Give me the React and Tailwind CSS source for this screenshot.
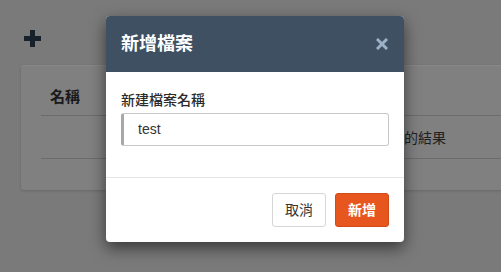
import React from 'react';

const FONT = { fontFamily: '"Liberation Sans", "Noto Sans CJK TC", sans-serif' };

export default function App() {
  return (
    <div className="relative h-[272px] w-[501px] overflow-hidden bg-[#7a7a7a]" style={FONT}>
      {/* page behind the overlay */}
      <div className="pl-[24px] pt-[30px]">
        <svg width="17" height="17" viewBox="0 0 17 17">
          <rect x="6" y="0" width="5" height="17" fill="#17212b" />
          <rect x="0" y="6" width="17" height="5" fill="#17212b" />
        </svg>
      </div>
      <div className="ml-[21px] mt-[18px] h-[125px] w-[520px] rounded-[3px] border-t border-[#888] bg-[#808080] shadow-[0_1px_3px_rgba(0,0,0,0.15)]">
        <div className="mx-[20px]">
          <div className="border-b border-[#6b6b6b] pb-[7px] pl-[9px] pt-[20px] text-[15px] font-semibold leading-[22px] text-[#1a1a1a]">
            名稱
          </div>
          <div className="flex border-b border-[#6b6b6b] pb-[9px] pt-[11px] text-[14px] leading-[22px] text-[#1f1f1f]">
            <div className="w-[405px] text-right">沒有找到符合搜尋的結果</div>
          </div>
        </div>
      </div>

      {/* modal */}
      <div className="absolute left-[106px] top-[16px] w-[298px] overflow-hidden rounded-[4px] bg-white shadow-[0_6px_16px_rgba(0,0,0,0.55)]">
        <div className="flex h-[56px] items-center justify-between bg-[#3e5062] pl-[15px] pr-[16px]">
          <span className="text-[18px] font-bold text-white">新增檔案</span>
          <svg width="12" height="12" viewBox="0 0 12 12">
            <path d="M2 2 L10 10 M10 2 L2 10" stroke="#9cb1c6" strokeWidth="3" strokeLinecap="square" />
          </svg>
        </div>
        <div className="border-b border-[#e5e5e5] px-[15px] pb-[31px] pt-[18px]">
          <div className="mb-[3px] text-[14px] font-medium leading-[20px] text-[#2b2b2b]">新建檔案名稱</div>
          <div className="flex h-[33px] w-[268px] items-center rounded-[3px] border border-l-[3px] border-[#c8c8c8] border-l-[#a8a8a8] pl-[14px] text-[14px] text-[#333]">
            test
          </div>
        </div>
        <div className="flex justify-end gap-[9px] px-[15px] py-[15px]">
          <button className="h-[34px] w-[54px] rounded-[3px] border border-[#d6d6d6] bg-white text-[14px] text-[#333]">
            取消
          </button>
          <button className="h-[34px] w-[54px] rounded-[3px] border border-[#d24a15] bg-[#e8561f] text-[14px] font-bold text-white">
            新增
          </button>
        </div>
      </div>
    </div>
  );
}
